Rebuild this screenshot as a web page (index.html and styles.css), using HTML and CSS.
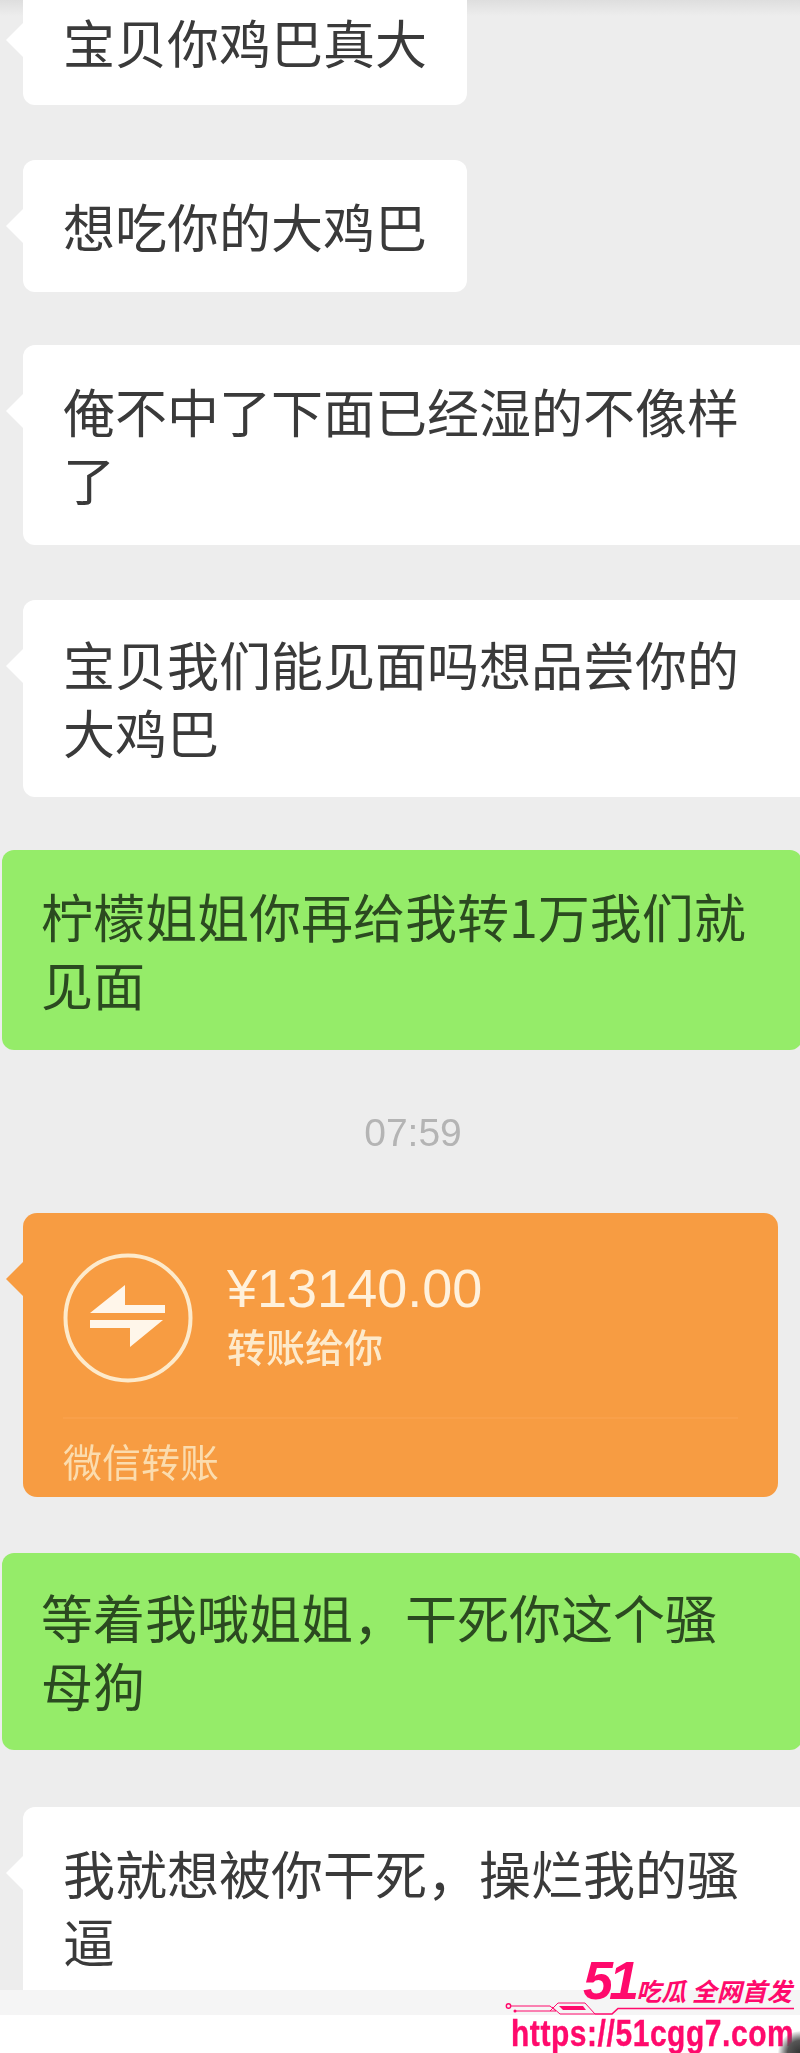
FILE: index.html
```html
<!DOCTYPE html>
<html lang="zh-CN">
<head>
    <meta charset="UTF-8">
    <meta name="viewport" content="width=device-width, initial-scale=1.0">
    <title>聊天记录</title>
    <link rel="stylesheet" href="styles.css">
</head>
<body>
    <div class="page">
        <div class="chat">
            <div class="msg msg-in msg-short msg-first">宝贝你鸡巴真大</div>
            <div class="msg msg-in msg-short gap-55">想吃你的大鸡巴</div>
            <div class="msg msg-in msg-wide gap-53">俺不中了下面已经湿的不像样了</div>
            <div class="msg msg-in msg-wide msg-tight gap-55">宝贝我们能见面吗想品尝你的大鸡巴</div>
            <div class="msg msg-out gap-53">柠檬姐姐你再给我转1万我们就见面</div>

            <div class="time">07:59</div>

            <div class="transfer">
                <div class="transfer-main">
                    <svg class="transfer-icon" viewBox="0 0 130 130">
                        <circle cx="65" cy="65" r="62.5" fill="none" stroke="#fdeacb" stroke-width="4"/>
                        <polygon points="27,60 62,32 62,52 102,52 102,60" fill="#fff6ea"/>
                        <polygon points="27,67 100,67 67,94 67,75 27,75" fill="#fff6ea"/>
                    </svg>
                    <div class="transfer-info">
                        <div class="transfer-amount">¥13140.00</div>
                        <div class="transfer-note">转账给你</div>
                    </div>
                </div>
                <div class="transfer-foot">微信转账</div>
            </div>

            <div class="msg msg-out msg-tight gap-56">等着我哦姐姐，干死你这个骚母狗</div>
            <div class="msg msg-in msg-wide msg-last gap-57">我就想被你干死，操烂我的骚逼</div>
        </div>
        <div class="strip"></div>
        <div class="footer"></div>

        <!-- 水印 -->
        <div class="mark">
            <svg class="mark-lines" viewBox="0 0 320 113">
                <circle cx="28.5" cy="66" r="2.2" fill="none" stroke="#ff0a6c" stroke-width="1.4"/>
                <circle cx="35" cy="71" r="1.5" fill="#ff0a6c"/>
                <polyline points="31,66 70,66 76,71 36,71" fill="none" stroke="#ff0a6c" stroke-width="1"/>
                <polyline points="70,71 78,63 105,63 115,74 80,74 72,67" fill="none" stroke="#ff0a6c" stroke-width="1"/>
                <polygon points="79,66 103,66 106,70 83,70" fill="#ff0a6c"/>
                <polyline points="115,74 132,74 138,68.5 314,68.5" fill="none" stroke="#ff0a6c" stroke-width="1.6"/>
            </svg>
            <div class="mark-logo">51</div>
            <div class="mark-slogan">吃瓜 全网首发</div>
            <div class="mark-url">https://51cgg7.com</div>
        </div>
        <div class="corner"></div>
    </div>
</body>
</html>
```

FILE: styles.css
```css
* {
    margin: 0;
    padding: 0;
    box-sizing: border-box;
}

body {
    background: #fff;
    font-family: "Liberation Sans", "Noto Sans CJK SC", sans-serif;
}

.page {
    position: relative;
    width: 800px;
    height: 2053px;
    overflow: hidden;
}

.chat {
    height: 1990px;
    overflow: hidden;
    background: linear-gradient(#dedede, #ededed 16px);
    filter: blur(0.5px);
}

/* 气泡 */
.msg {
    position: relative;
    width: 444px;
    padding: 32px 20px 32px 40px;
    margin-left: 23px;
    border-radius: 12px;
    font-family: "Noto Sans CJK SC", sans-serif;
    font-size: 52px;
    line-height: 68px;
    color: #3a3a3a;
}

.msg-in {
    background: #fff;
}

.msg-in::before,
.transfer::before {
    content: "";
    position: absolute;
    left: -12px;
    top: 54px;
    width: 24px;
    height: 24px;
    background: inherit;
    transform: rotate(45deg);
}

.msg-first {
    padding-top: 8px;
    padding-bottom: 29px;
    border-radius: 0 0 12px 12px;
}

.msg-first::before {
    top: 28px;
}

.msg-wide {
    width: 800px;
    padding-right: 37px;
}

.msg-tight {
    padding-top: 30px;
    padding-bottom: 31px;
}

.msg-last {
    height: 183px;
    border-radius: 12px 0 0 0;
}

.msg-out {
    width: 800px;
    margin-left: 2px;
    padding-left: 39px;
    padding-right: 39px;
    background: #95ec69;
    color: #2b4a20;
}

.gap-53 { margin-top: 53px; }
.gap-55 { margin-top: 55px; }
.gap-56 { margin-top: 56px; }
.gap-57 { margin-top: 57px; }

.time {
    margin-top: 53px;
    padding-left: 26px;
    font-size: 39px;
    line-height: 60px;
    text-align: center;
    color: #b4b4b4;
}

/* 转账 */
.transfer {
    position: relative;
    width: 755px;
    height: 284px;
    margin: 50px 0 0 23px;
    padding: 40px 40px 0;
    border-radius: 14px;
    background: #f79c42;
    color: #fdeacb;
}

.transfer-main {
    display: flex;
    align-items: flex-start;
    gap: 34px;
    height: 164px;
}

.transfer-icon {
    flex: none;
    width: 130px;
    height: 130px;
}

.transfer-amount {
    font-size: 54px;
    line-height: 64px;
    margin-top: 3px;
    color: #fff1dc;
}

.transfer-note {
    font-family: "Noto Sans CJK SC", sans-serif;
    font-size: 39px;
    line-height: 50px;
    font-weight: 500;
}

.transfer-foot {
    height: 80px;
    padding-top: 16px;
    border-top: 2px solid #f9a04a;
    font-family: "Noto Sans CJK SC", sans-serif;
    font-size: 39px;
    line-height: 50px;
    color: #fbdcae;
}

.strip {
    height: 25px;
    background: #f5f5f5;
}

.footer {
    height: 38px;
    background: #fff;
}

/* 水印 */
.mark {
    position: absolute;
    left: 480px;
    top: 1940px;
    width: 320px;
    height: 113px;
    color: #ff0a6c;
}

.mark-lines {
    position: absolute;
    left: 0;
    top: 0;
    width: 320px;
    height: 113px;
}

.mark-logo {
    position: absolute;
    left: 103px;
    top: 16px;
    font-size: 54px;
    line-height: 48px;
    font-weight: bold;
    font-style: italic;
    letter-spacing: -4px;
}

.mark-slogan {
    position: absolute;
    left: 156px;
    top: 37px;
    font-family: "Noto Sans CJK SC", sans-serif;
    font-size: 25px;
    line-height: 26px;
    font-weight: bold;
    font-style: italic;
    white-space: nowrap;
}

.mark-url {
    position: absolute;
    left: 31px;
    top: 76px;
    font-size: 37px;
    line-height: 36px;
    font-weight: bold;
    letter-spacing: 0.7px;
    -webkit-text-stroke: 0.4px #ff0a6c;
    transform: scaleX(0.81);
    transform-origin: left center;
    white-space: nowrap;
}

.corner {
    position: absolute;
    right: -22px;
    bottom: -22px;
    width: 44px;
    height: 44px;
    border-radius: 50%;
    background: radial-gradient(circle, #333 0%, #555 40%, rgba(255, 255, 255, 0) 72%);
}
```
